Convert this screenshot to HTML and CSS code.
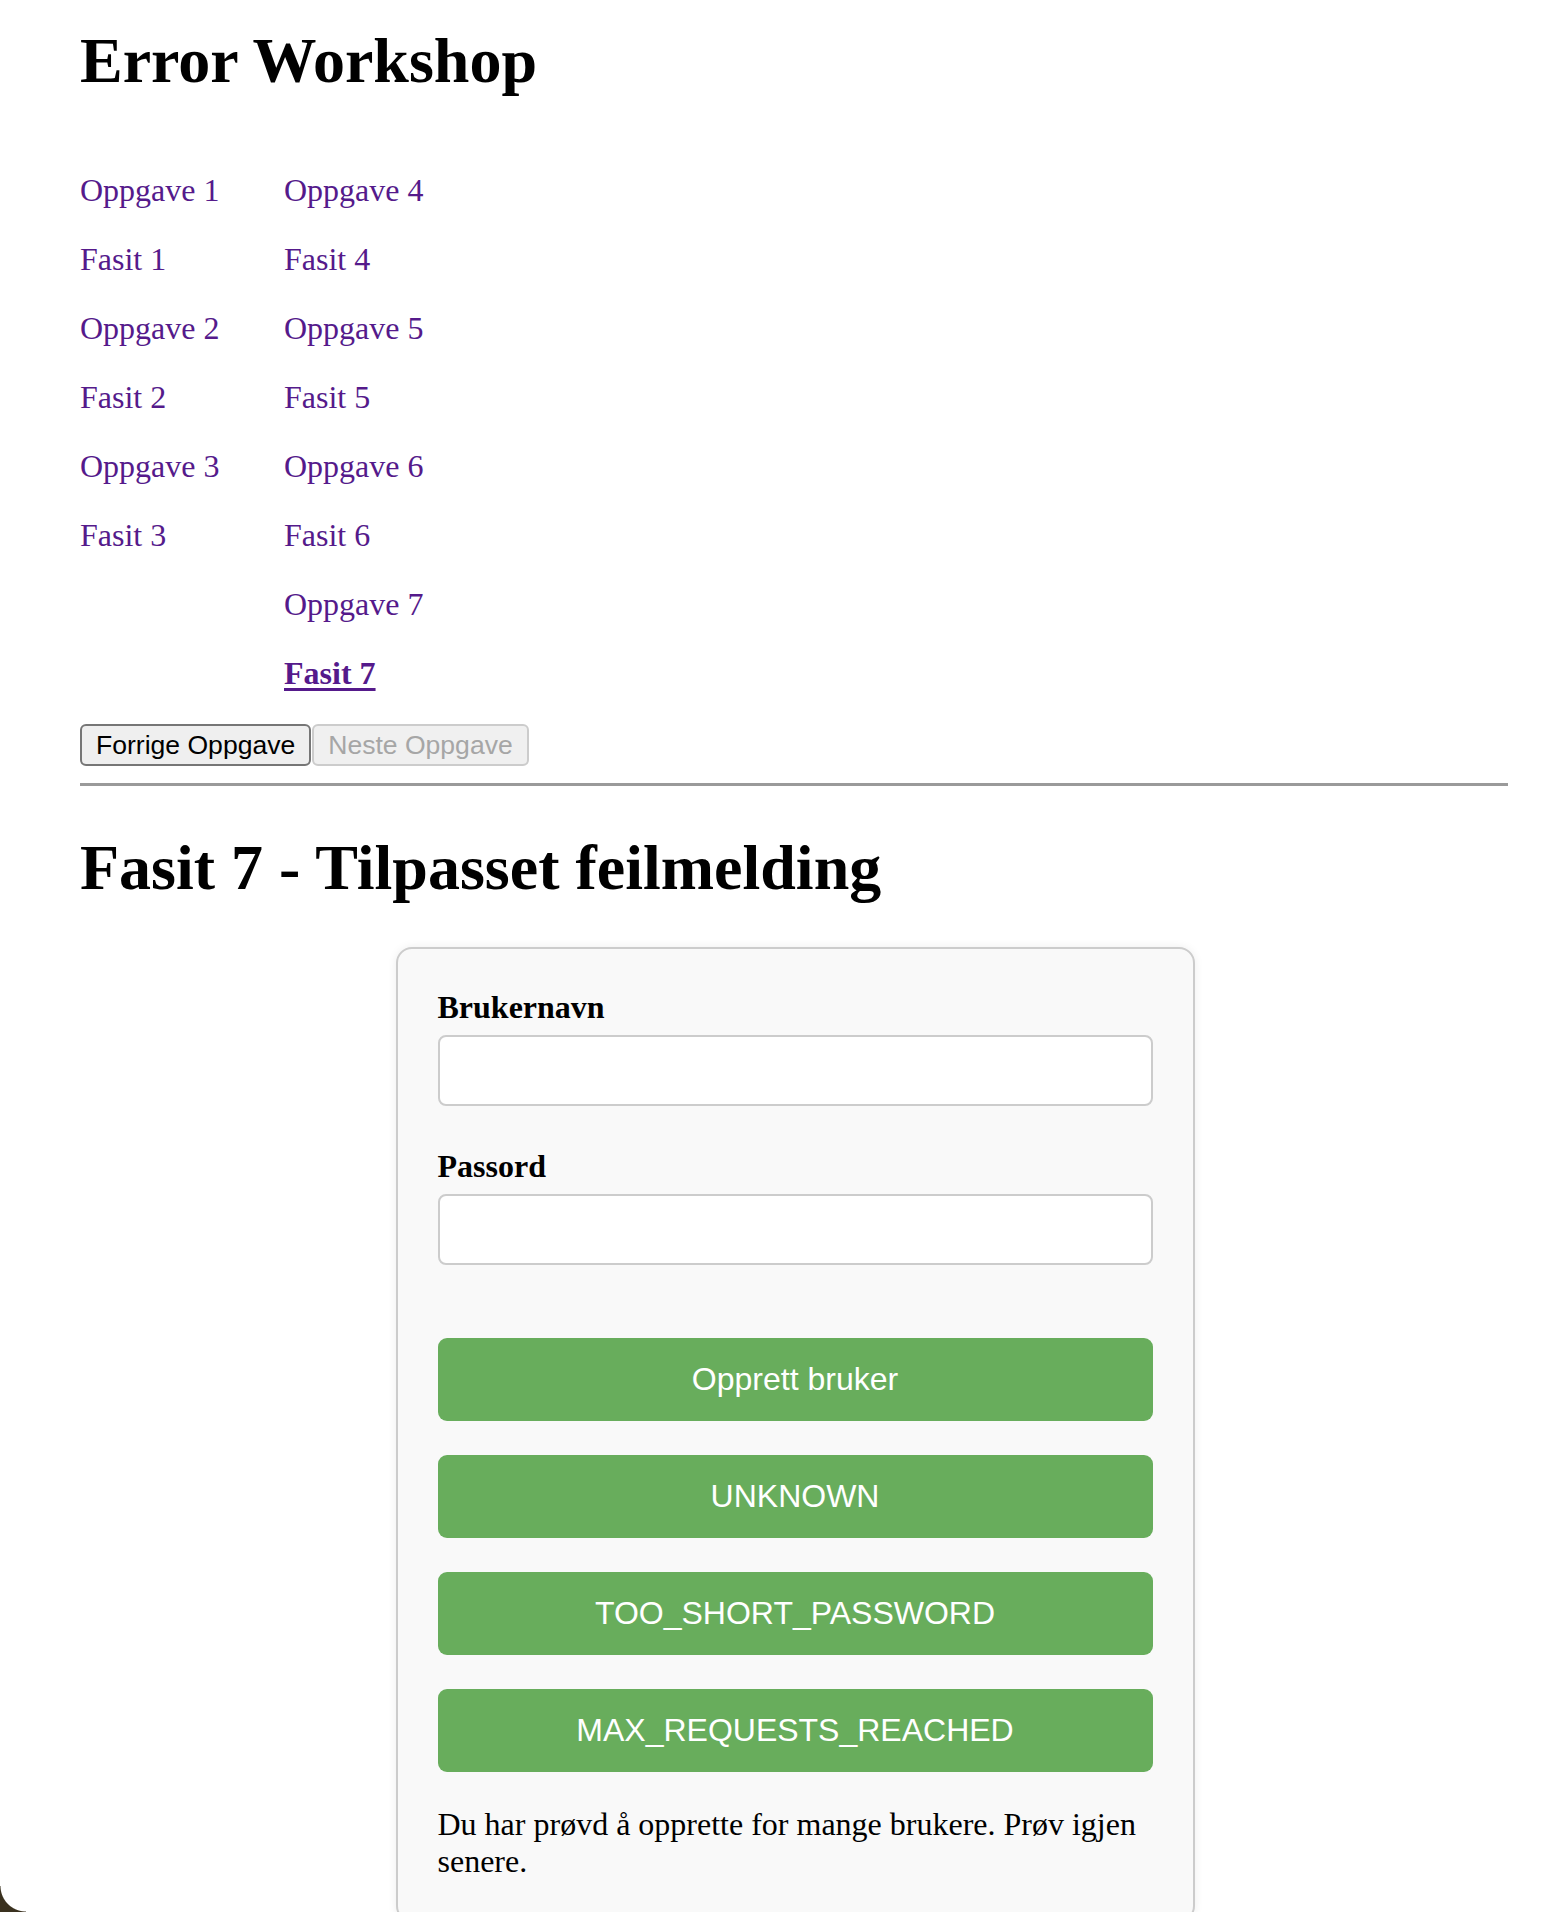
FILE: index.html
```html
<!DOCTYPE html>
<html lang="no">
<head>
<meta charset="utf-8">
<title>Error Workshop</title>
<link rel="stylesheet" href="styles.css">
</head>
<body>
<div class="page">
  <h1 class="title">Error Workshop</h1>
  <nav class="tasks">
    <div class="col col-first">
      <a href="#">Oppgave 1</a>
      <a href="#">Fasit 1</a>
      <a href="#">Oppgave 2</a>
      <a href="#">Fasit 2</a>
      <a href="#">Oppgave 3</a>
      <a href="#">Fasit 3</a>
    </div>
    <div class="col">
      <a href="#">Oppgave 4</a>
      <a href="#">Fasit 4</a>
      <a href="#">Oppgave 5</a>
      <a href="#">Fasit 5</a>
      <a href="#">Oppgave 6</a>
      <a href="#">Fasit 6</a>
      <a href="#">Oppgave 7</a>
      <a href="#" class="current">Fasit 7</a>
    </div>
  </nav>
  <div class="pager">
    <button class="pager-btn" type="button">Forrige Oppgave</button>
    <button class="pager-btn" type="button" disabled>Neste Oppgave</button>
  </div>
  <hr class="divider">
  <h2 class="task-title">Fasit 7 - Tilpasset feilmelding</h2>
  <form class="card">
    <label class="field-label" for="user">Brukernavn</label>
    <input class="field-input field-first" id="user" type="text">
    <label class="field-label" for="pass">Passord</label>
    <input class="field-input" id="pass" type="password">
    <div class="actions">
      <button class="action-btn" type="button">Opprett bruker</button>
      <button class="action-btn" type="button">UNKNOWN</button>
      <button class="action-btn" type="button">TOO_SHORT_PASSWORD</button>
      <button class="action-btn" type="button">MAX_REQUESTS_REACHED</button>
    </div>
    <p class="message">Du har prøvd å opprette for mange brukere. Prøv igjen senere.</p>
  </form>
</div>
<div class="window-corner"></div>
</body>
</html>
```
FILE: styles.css
```css
html, body {
  margin: 0;
  background: #ffffff;
}

body {
  font-family: "Liberation Serif", "Times New Roman", serif;
  font-size: 32px;
  color: #000000;
}

.page {
  padding: 24px 40px 0 80px;
}

.title {
  margin: 0;
  font-size: 64px;
  line-height: 74px;
  font-weight: bold;
}

.tasks {
  display: flex;
  margin-top: 74px;
}

.col {
  display: flex;
  flex-direction: column;
  align-items: flex-start;
  gap: 32px;
}

.col-first {
  width: 204px;
}

.tasks a {
  line-height: 37px;
  color: #551a8b;
  text-decoration: none;
}

.tasks a.current {
  font-weight: bold;
  text-decoration: underline;
  text-decoration-thickness: 3px;
  text-underline-offset: 4px;
}

.pager {
  display: flex;
  gap: 1px;
  margin-top: 32px;
}

.pager-btn {
  box-sizing: border-box;
  height: 42px;
  padding: 0 14px;
  font-family: "Liberation Sans", Arial, sans-serif;
  font-size: 26.55px;
  color: #000000;
  background: #efefef;
  border: 2px solid #767676;
  border-radius: 6px;
}

.pager-btn:disabled {
  color: #a6a6a6;
  background: #f0f0f0;
  border-color: #cccccc;
}

.divider {
  margin: 17px 2px 0 0;
  height: 0;
  border: 0;
  border-top: 3px solid #9a9a9a;
}

.task-title {
  margin: 45px 0 0;
  font-size: 64px;
  line-height: 74px;
  font-weight: bold;
}

.card {
  box-sizing: border-box;
  width: 799px;
  margin: 42px auto 0;
  padding: 40px;
  background: #f9f9f9;
  border: 2px solid #cccccc;
  border-radius: 16px;
  box-shadow: 0 0 10px rgba(0, 0, 0, 0.07);
}

.field-label {
  display: block;
  line-height: 37px;
  font-weight: bold;
  margin-bottom: 9px;
}

.field-input {
  display: block;
  box-sizing: border-box;
  width: 100%;
  height: 71px;
  margin: 0;
  padding: 0 16px;
  font-size: 32px;
  background: #ffffff;
  border: 2px solid #cccccc;
  border-radius: 8px;
}

.field-first {
  margin-bottom: 42px;
}

.actions {
  display: flex;
  flex-direction: column;
  gap: 34px;
  margin-top: 73px;
}

.action-btn {
  height: 83px;
  font-family: "Liberation Sans", Arial, sans-serif;
  font-size: 32px;
  color: #ffffff;
  background: #68ad5c;
  border: 0;
  border-radius: 9px;
}

.message {
  margin: 34px 0 0;
  line-height: 37px;
}

.window-corner {
  position: fixed;
  left: 0;
  bottom: 0;
  width: 26px;
  height: 26px;
  background: radial-gradient(circle at 100% 0, rgba(0, 0, 0, 0) 25px, #3a311f 26px);
}
```
